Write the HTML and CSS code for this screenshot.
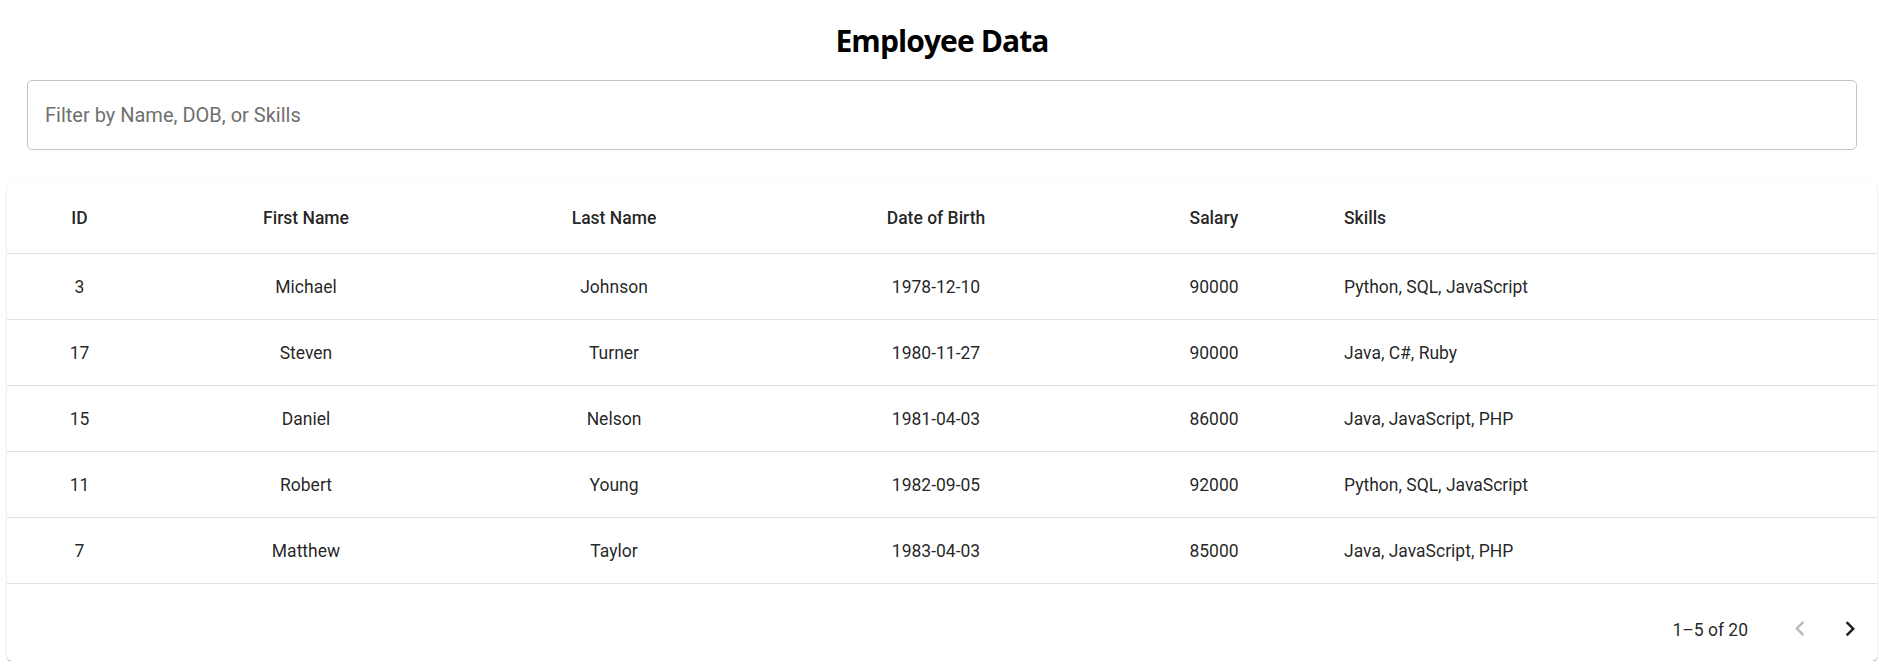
FILE: index.html
```html
<!DOCTYPE html>
<html lang="en">
<head>
<meta charset="utf-8">
<title>Employee Data</title>
<link rel="stylesheet" href="styles.css">
</head>
<body>
<div class="page">
  <h1 class="title">Employee Data</h1>
  <div class="filter">
    <input class="filter-input" type="text" placeholder="Filter by Name, DOB, or Skills">
  </div>
  <div class="paper">
    <table class="grid">
      <colgroup>
        <col class="c-id"><col class="c-first"><col class="c-last"><col class="c-dob"><col class="c-salary"><col class="c-skills">
      </colgroup>
      <thead>
        <tr>
          <th>ID</th><th>First Name</th><th>Last Name</th><th>Date of Birth</th><th>Salary</th><th class="left">Skills</th>
        </tr>
      </thead>
      <tbody>
        <tr><td>3</td><td>Michael</td><td>Johnson</td><td>1978-12-10</td><td>90000</td><td class="left">Python, SQL, JavaScript</td></tr>
        <tr><td>17</td><td>Steven</td><td>Turner</td><td>1980-11-27</td><td>90000</td><td class="left">Java, C#, Ruby</td></tr>
        <tr><td>15</td><td>Daniel</td><td>Nelson</td><td>1981-04-03</td><td>86000</td><td class="left">Java, JavaScript, PHP</td></tr>
        <tr><td>11</td><td>Robert</td><td>Young</td><td>1982-09-05</td><td>92000</td><td class="left">Python, SQL, JavaScript</td></tr>
        <tr><td>7</td><td>Matthew</td><td>Taylor</td><td>1983-04-03</td><td>85000</td><td class="left">Java, JavaScript, PHP</td></tr>
      </tbody>
    </table>
    <div class="pager">
      <span class="pager-text">1–5 of 20</span>
      <div class="pager-actions">
        <button class="pager-btn disabled" aria-label="Previous page">
          <svg viewBox="0 0 24 24" width="30" height="30"><path d="M15.41 16.09l-4.58-4.59 4.58-4.59L14 5.5l-6 6 6 6z" fill="currentColor"/></svg>
        </button>
        <button class="pager-btn" aria-label="Next page">
          <svg viewBox="0 0 24 24" width="30" height="30"><path d="M8.59 16.34l4.58-4.59-4.58-4.59L10 5.75l6 6-6 6z" fill="currentColor"/></svg>
        </button>
      </div>
    </div>
  </div>
</div>
</body>
</html>
```
FILE: styles.css
```css
* { box-sizing: border-box; }

body {
  margin: 0;
  background: #ffffff;
  font-family: Roboto, "Liberation Sans", Arial, sans-serif;
  color: rgba(0, 0, 0, 0.87);
}

.page {
  padding: 0 11px 0 7px;
}

.title {
  margin: 20px 0 0;
  text-align: center;
  font-family: "Open Sans", "Noto Sans", sans-serif;
  font-weight: 700;
  font-size: 30px;
  letter-spacing: -0.9px;
  line-height: 41px;
  color: #000;
}

.filter {
  margin: 19px 20px 0;
}

.filter-input {
  display: block;
  width: 100%;
  height: 70px;
  border: 1px solid #c4c4c4;
  border-radius: 5px;
  padding: 0 17px;
  font-family: Roboto, sans-serif;
  font-size: 20px;
  color: rgba(0, 0, 0, 0.87);
  background: #fff;
  outline: none;
}

.filter-input::placeholder {
  color: #6f6f6f;
  opacity: 1;
}

.paper {
  margin-top: 33px;
  background: #fff;
  border-radius: 5px;
  box-shadow: 0 2px 1px -1px rgba(0,0,0,0.2), 0 1px 1px 0 rgba(0,0,0,0.14), 0 1px 3px 0 rgba(0,0,0,0.12);
  overflow: hidden;
}

.grid {
  width: 100%;
  border-collapse: collapse;
  table-layout: fixed;
  font-size: 17.5px;
}

.c-id { width: 145px; }
.c-first { width: 308px; }
.c-last { width: 308px; }
.c-dob { width: 336px; }
.c-salary { width: 220px; }

.grid th,
.grid td {
  text-align: center;
  padding: 0 20px;
  border-bottom: 1px solid #e0e0e0;
  color: rgba(0, 0, 0, 0.87);
  line-height: 24px;
}

.grid th {
  font-weight: 500;
  height: 70px;
}

.grid td {
  font-weight: 400;
  height: 66px;
  padding-top: 2px;
}

.grid .left {
  text-align: left;
}

.pager {
  height: 77px;
  padding: 14px 2px 0 0;
  display: flex;
  align-items: center;
  justify-content: flex-end;
}

.pager-text {
  font-size: 17.5px;
  line-height: 24px;
  color: rgba(0, 0, 0, 0.87);
  margin-top: 2px;
}

.pager-actions {
  display: flex;
  margin-left: 27px;
}

.pager-btn {
  width: 50px;
  height: 50px;
  padding: 10px;
  border: none;
  background: transparent;
  border-radius: 50%;
  color: rgba(0, 0, 0, 0.87);
  display: flex;
  align-items: center;
  justify-content: center;
}

.pager-btn svg {
  display: block;
}

.pager-btn.disabled {
  color: rgba(0, 0, 0, 0.26);
}
```
